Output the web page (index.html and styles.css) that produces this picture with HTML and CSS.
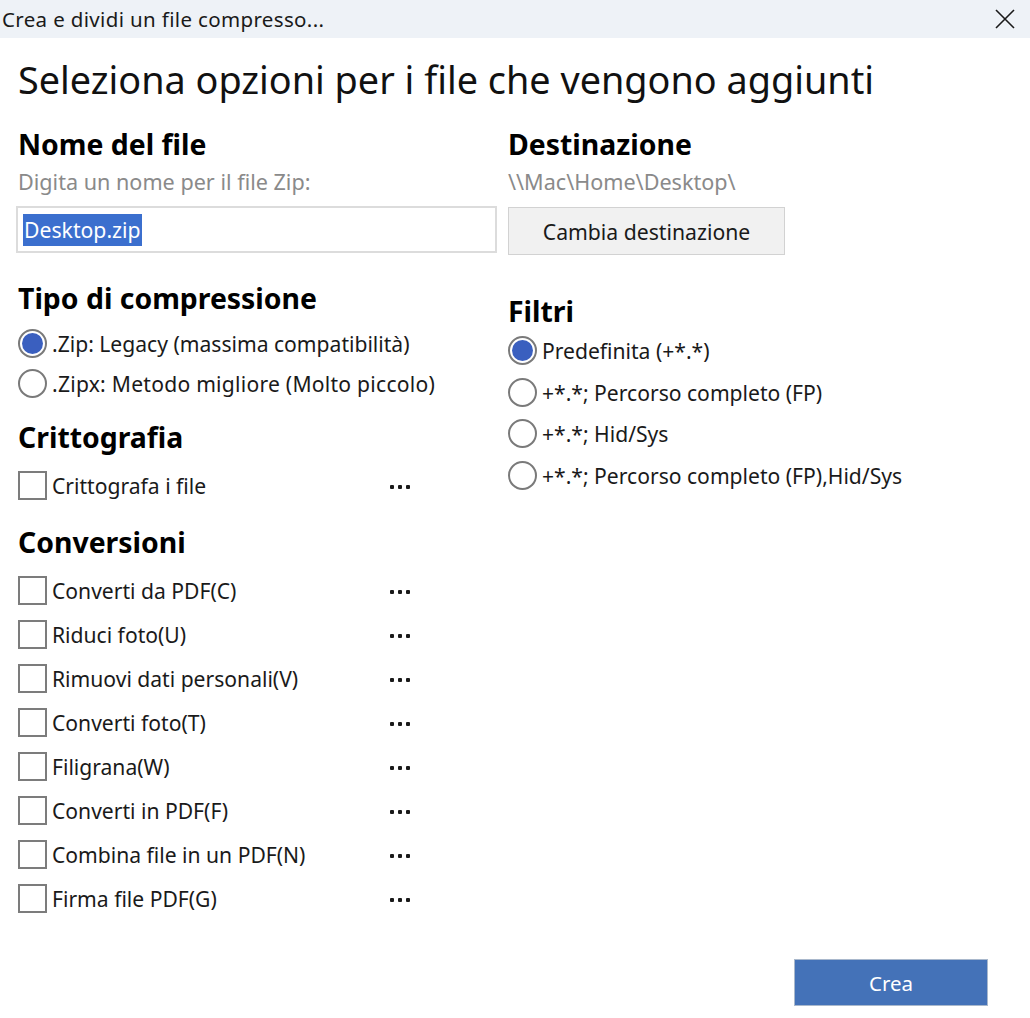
FILE: index.html
```html
<!DOCTYPE html>
<html lang="it">
<head>
<meta charset="utf-8">
<title>Crea e dividi un file compresso...</title>
<link rel="stylesheet" href="styles.css">
</head>
<body>
<div class="window">
  <div class="titlebar">
    <span class="title">Crea e dividi un file compresso...</span>
    <svg class="close" width="20" height="20" viewBox="0 0 20 20"><path d="M1 1 L19 19 M19 1 L1 19" stroke="#1a1a1a" stroke-width="1.6" fill="none"/></svg>
  </div>
  <div class="main">
    <h1 class="heading">Seleziona opzioni per i file che vengono aggiunti</h1>
    <div class="columns">
      <div class="col col-left">
        <h2 class="sect">Nome del file</h2>
        <div class="hint">Digita un nome per il file Zip:</div>
        <div class="input"><span class="sel">Desktop.zip</span></div>

        <h2 class="sect sect-type">Tipo di compressione</h2>
        <div class="opt"><span class="radio on"></span><span class="lbl">.Zip: Legacy (massima compatibilità)</span></div>
        <div class="opt"><span class="radio"></span><span class="lbl lbl-wide">.Zipx: Metodo migliore (Molto piccolo)</span></div>

        <h2 class="sect sect-crypt">Crittografia</h2>
        <div class="opt chk"><span class="box"></span><span class="lbl">Crittografa i file</span><span class="dots"><i></i><i></i><i></i></span></div>

        <h2 class="sect sect-conv">Conversioni</h2>
        <div class="convlist">
          <div class="opt chk"><span class="box"></span><span class="lbl">Converti da PDF(C)</span><span class="dots"><i></i><i></i><i></i></span></div>
          <div class="opt chk"><span class="box"></span><span class="lbl">Riduci foto(U)</span><span class="dots"><i></i><i></i><i></i></span></div>
          <div class="opt chk"><span class="box"></span><span class="lbl">Rimuovi dati personali(V)</span><span class="dots"><i></i><i></i><i></i></span></div>
          <div class="opt chk"><span class="box"></span><span class="lbl">Converti foto(T)</span><span class="dots"><i></i><i></i><i></i></span></div>
          <div class="opt chk"><span class="box"></span><span class="lbl">Filigrana(W)</span><span class="dots"><i></i><i></i><i></i></span></div>
          <div class="opt chk"><span class="box"></span><span class="lbl">Converti in PDF(F)</span><span class="dots"><i></i><i></i><i></i></span></div>
          <div class="opt chk"><span class="box"></span><span class="lbl">Combina file in un PDF(N)</span><span class="dots"><i></i><i></i><i></i></span></div>
          <div class="opt chk"><span class="box"></span><span class="lbl">Firma file PDF(G)</span><span class="dots"><i></i><i></i><i></i></span></div>
        </div>
      </div>
      <div class="col col-right">
        <h2 class="sect">Destinazione</h2>
        <div class="hint">\\Mac\Home\Desktop\</div>
        <button class="btn">Cambia destinazione</button>

        <h2 class="sect sect-filter">Filtri</h2>
        <div class="filters">
          <div class="opt"><span class="radio on"></span><span class="lbl">Predefinita (+*.*)</span></div>
          <div class="opt"><span class="radio"></span><span class="lbl">+*.*; Percorso completo (FP)</span></div>
          <div class="opt"><span class="radio"></span><span class="lbl">+*.*; Hid/Sys</span></div>
          <div class="opt"><span class="radio"></span><span class="lbl">+*.*; Percorso completo (FP),Hid/Sys</span></div>
        </div>
      </div>
    </div>
    <div class="footer">
      <button class="primary">Crea</button>
    </div>
  </div>
</div>
</body>
</html>
```

FILE: styles.css
```css
* { box-sizing: border-box; }
html, body { margin: 0; padding: 0; background: #ffffff; }
body {
  font-family: "Noto Sans", "Open Sans", "Liberation Sans", sans-serif;
  color: #1a1a1a;
  width: 1030px;
  height: 1018px;
  overflow: hidden;
}
.titlebar {
  height: 38px;
  background: #eef2f7;
  display: flex;
  align-items: center;
  justify-content: space-between;
  padding: 0 15px 0 2px;
}
.title {
  font-size: 20.5px;
  letter-spacing: 0.35px;
  color: #1a1a1a;
  line-height: 26px;
}
.close { display: block; }
.main { padding: 0 18px; }
.heading {
  margin: 20px 0 0 0;
  font-size: 37.8px;
  line-height: 44px;
  font-weight: 400;
  color: #111;
}
.columns {
  display: grid;
  grid-template-columns: 490px 1fr;
  margin-top: 25px;
}
.col { display: flex; flex-direction: column; align-items: flex-start; }
.sect {
  margin: 0;
  font-size: 28.4px;
  line-height: 34px;
  font-weight: 700;
  color: #000;
}
.hint {
  margin-top: 8px;
  font-size: 21.6px;
  line-height: 26px;
  color: #8a8a8a;
}
.input {
  margin: 11px 0 0 -2px;
  width: 481px;
  height: 47px;
  border: 2px solid #dcdcdc;
  padding: 6px 0 0 5px;
}
.sel {
  display: inline-block;
  background: #3b6fce;
  color: #fff;
  font-size: 21.2px;
  line-height: 32px;
  padding: 0 1px;
}
.btn {
  margin-top: 12px;
  width: 277px;
  height: 48px;
  background: #f1f1f1;
  border: 1px solid #d2d2d2;
  font-family: inherit;
  font-size: 21.2px;
  color: #1a1a1a;
  padding: 0;
}
.sect-type { margin-top: 28px; }
.sect-crypt { margin-top: 17px; }
.sect-conv { margin-top: 20px; }
.sect-filter { margin-top: 39px; }
.opt {
  display: flex;
  align-items: center;
  height: 40px;
  font-size: 21.1px;
}
.col-left .sect-type + .opt { margin-top: 8px; }
.sect-crypt + .opt { margin-top: 11px; }
.convlist { margin-top: 9px; }
.convlist .opt { height: 44px; }
.filters { margin-top: 2px; }
.filters .opt { height: 41.5px; }
.radio {
  width: 29px;
  height: 29px;
  border-radius: 50%;
  border: 2px solid #7a7a7a;
  background: #fff;
  position: relative;
  flex: none;
}
.radio.on::after {
  content: "";
  position: absolute;
  left: 2px; top: 2px;
  width: 21px; height: 21px;
  border-radius: 50%;
  background: #3a5fbf;
}
.box {
  width: 29px;
  height: 29px;
  border: 2px solid #7c7c7c;
  background: #fff;
  flex: none;
}
.lbl { margin-left: 5px; white-space: nowrap; }
.lbl-wide { letter-spacing: 0.25px; }
.chk .lbl { width: 338px; }
.dots {
  display: flex;
  gap: 4px;
  margin-top: 4px;
}
.dots i {
  display: block;
  width: 4px;
  height: 4px;
  border-radius: 1px;
  background: #1a1a1a;
}
.footer {
  display: flex;
  justify-content: flex-end;
  margin-top: 39px;
  padding-right: 24px;
}
.primary {
  width: 194px;
  height: 47px;
  background: #4472b8;
  border: 1px solid #a9b8cc;
  color: #fff;
  font-family: inherit;
  font-size: 20.5px;
  padding: 0;
}
```
